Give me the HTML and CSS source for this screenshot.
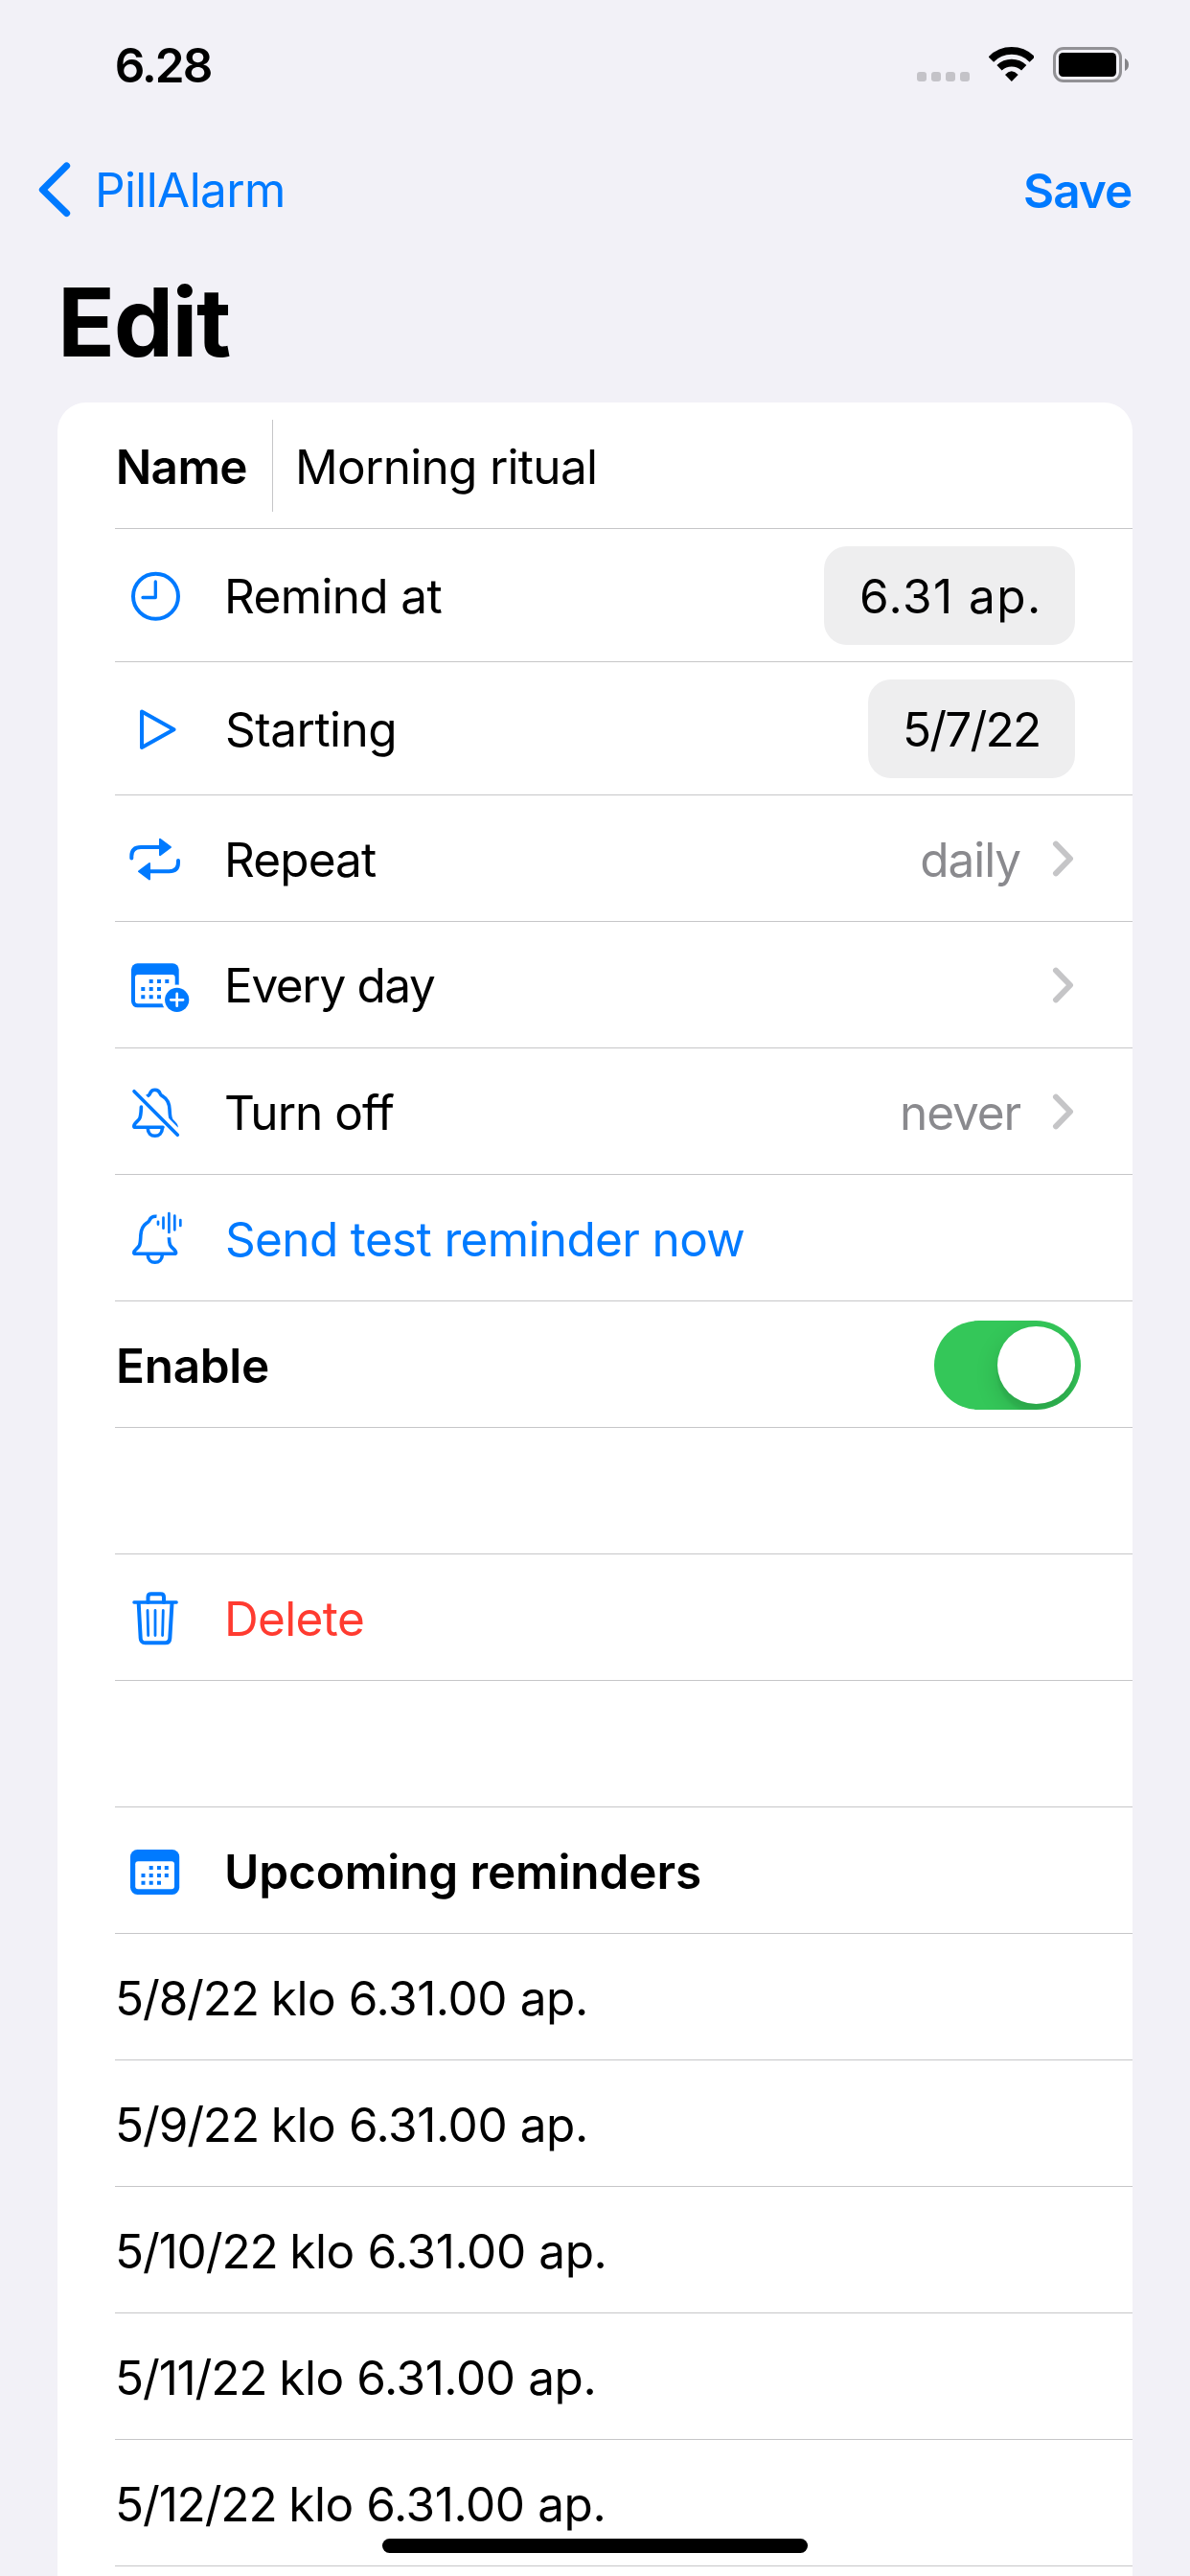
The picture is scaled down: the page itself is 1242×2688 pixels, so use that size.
FILE: index.html
```html
<!DOCTYPE html>
<html lang="en">
<head>
<meta charset="utf-8">
<title>Edit – PillAlarm</title>
<link rel="stylesheet" href="styles.css">
</head>
<body>
<div class="screen">
  <header class="status-bar">
    <span class="time">6.28</span>
    <div class="status-icons">
      <div class="signal"><i></i><i></i><i></i><i></i></div>
      <svg class="wifi" viewBox="395 87 143 108">
        <path d="M402 126A90 90 0 0 1 531 126M428 152A56 56 0 0 1 505 152" fill="none" stroke="#000" stroke-width="23"/>
        <path d="M466.500 195L446 174Q466 152 487 174Z"/>
      </svg>
      <svg class="battery" viewBox="0 0 79 37">
        <rect x="1.500" y="1.500" width="69" height="34" rx="9.500" fill="none" stroke="#929195" stroke-width="3"/>
        <rect x="6" y="6" width="60" height="25" rx="4.500"/>
        <path d="M75 12C77.500 13 79 15.500 79 18.500S77.500 24 75 25Z" fill="#858488"/>
      </svg>
    </div>
  </header>

  <nav class="nav-bar">
    <a class="back">
      <svg class="back-icon" viewBox="0 0 36 60"><path d="M29.500 5L4.500 30L29.500 54.500"/></svg>
      <span class="back-label">PillAlarm</span>
    </a>
    <a class="save">Save</a>
  </nav>

  <h1 class="title">Edit</h1>

  <main class="card">
    <div class="row name-row">
      <span class="label strong name">Name</span>
      <span class="label field">Morning ritual</span>
    </div>
    <div class="row tall">
      <svg class="icon" viewBox="0 0 114 138"><g class="line"><circle cx="42.500" cy="70.300" r="23.500"/><path class="thin" d="M42.300 55V71.500H29"/></g></svg>
      <span class="label">Remind at</span>
      <span class="pill time-pill">6.31 ap.</span>
    </div>
    <div class="row tall">
      <svg class="icon" viewBox="0 0 114 138"><path class="line" d="M28 51.500L61.500 70.200L28 89Z"/></svg>
      <span class="label starting">Starting</span>
      <span class="pill date-pill">5/7/22</span>
    </div>
    <div class="row">
      <svg class="icon" viewBox="0 0 114 131">
        <path class="line" d="M17.300 65.500V63.500C17.300 57 21 54 27 54H46M66 68V70C66 76.300 62.500 79.300 56.500 79.300H36"/>
        <path class="solid" d="M47 45.800L58 54L47 62.200ZM36 71.100L25 79.300L36 87.500Z"/>
      </svg>
      <span class="label repeat">Repeat</span>
      <span class="value">daily</span>
      <svg class="chevron" viewBox="0 0 24 42"><path d="M4 5.700L19 21L4 36.300"/></svg>
    </div>
    <div class="row">
      <svg class="icon" viewBox="0 0 114 131">
        <rect class="fill" x="17" y="43.300" width="49.700" height="46" rx="6.500"/>
        <rect class="paper" x="21" y="55" width="41.700" height="30.300" rx="3"/>
        <path class="dots" d="M37.700 62h0M46 62h0M54.300 62h0M29.300 70h0M37.700 70h0M46 70h0M29.300 78.300h0M37.700 78.300h0M46 78.300h0"/>
        <circle class="paper" cx="64.700" cy="81.300" r="15.800"/>
        <circle class="fill" cx="64.700" cy="81.300" r="12.600"/>
        <path class="plus" d="M58.300 81.300H71.100M64.700 74.900V87.700"/>
      </svg>
      <span class="label every">Every day</span>
      <svg class="chevron" viewBox="0 0 24 42"><path d="M4 5.700L19 21L4 36.300"/></svg>
    </div>
    <div class="row">
      <svg class="icon" viewBox="0 0 114 131"><g class="line bell">
        <path d="M27.400 61C27.200 65 27.200 69 26 72.500C24.800 76 19.800 77.500 19.800 81.200Q19.800 82.300 21.500 82.300H50"/>
        <path d="M33.300 50C35.500 49.500 36.300 48 36.800 46.500C37.600 44.500 39.300 43.200 41.700 43.200C44.300 43.200 46.300 44.800 47 47C47.600 48.800 48.800 49.300 50.300 50.200C55 53 56.700 58 57 63.500C57.300 69 57.300 71.500 58.500 74C60 77 63.500 78.500 64 81.500"/>
        <path d="M34.300 83.500C34.300 88.500 37.500 91.300 41.700 91.300S49.300 88.500 49.300 83.500"/>
        <path class="gap" d="M22.500 42L68 87.700"/>
        <path d="M20 44.700L65.300 90.300"/>
      </g></svg>
      <span class="label turn">Turn off</span>
      <span class="value">never</span>
      <svg class="chevron" viewBox="0 0 24 42"><path d="M4 5.700L19 21L4 36.300"/></svg>
    </div>
    <div class="row">
      <svg class="icon" viewBox="0 0 114 131">
        <g class="line bell">
          <path class="flat" d="M43.500 43.300C39.500 42.800 37 44.800 36 47.300C35.300 49 34.500 49.500 33 50.300C29 53 27.300 57 26.900 62.500C26.600 67.500 26.700 70.500 25.500 73.500C24 77 19.800 78 19.800 81.300Q19.800 82.300 21.300 82.300H62Q63.600 82.300 63.600 81.300C63.600 78 59 76.500 57.500 73C56.600 70.700 56.500 68.500 56.400 65.300"/>
          <path d="M34.300 83.500C34.300 88.500 37.500 91.300 41.700 91.300S49.300 88.500 49.300 83.500"/>
        </g>
        <path class="wave" d="M45 48.800V51.600M50.500 44.500V55.700M56.400 40V60M62.300 42.700V57.300M68.300 47.100V53"/>
      </svg>
      <span class="label link">Send test reminder now</span>
    </div>
    <div class="row">
      <span class="label strong enable">Enable</span>
      <span class="toggle"><i class="knob"></i></span>
    </div>
    <div class="row"></div>
    <div class="row">
      <svg class="icon" viewBox="0 0 114 131"><g class="line">
        <path class="thin" d="M19.900 50H64.200"/>
        <path d="M34.500 50V44.500Q34.500 41.200 37.800 41.200H47.700Q51 41.200 51 44.500V50M24.700 51L26.700 87.500Q27 92.200 31.500 92.200H52.500Q57 92.200 57.300 87.500L59.500 51"/>
        <path class="rib" d="M34 58.500L34.700 84.500M42 58.500V84.500M50.300 58.500L49.600 84.500"/>
      </g></svg>
      <span class="label delete">Delete</span>
    </div>
    <div class="row"></div>
    <div class="row">
      <svg class="icon" viewBox="0 0 114 131">
        <rect class="fill" x="16" y="44" width="51.200" height="47" rx="7.500"/>
        <rect class="paper" x="21.200" y="56.300" width="40.800" height="29" rx="3"/>
        <path class="dots" d="M37.700 63h0M46 63h0M53.800 63h0M29.500 71h0M37.700 71h0M46 71h0M53.800 71h0M29.500 78.700h0M37.700 78.700h0M46 78.700h0"/>
      </svg>
      <span class="label strong upcoming">Upcoming reminders</span>
    </div>
    <div class="row"><span class="label date"><span class="day">5/8/22 </span>klo 6.31.00 ap.</span></div>
    <div class="row"><span class="label date"><span class="day">5/9/22 </span>klo 6.31.00 ap.</span></div>
    <div class="row"><span class="label date"><span class="day">5/10/22 </span>klo 6.31.00 ap.</span></div>
    <div class="row"><span class="label date"><span class="day">5/11/22 </span>klo 6.31.00 ap.</span></div>
    <div class="row"><span class="label date"><span class="day">5/12/22 </span>klo 6.31.00 ap.</span></div>
    <div class="row"></div>
  </main>
  <div class="home-indicator"></div>
</div>
</body>
</html>
```

FILE: styles.css
```css
* { box-sizing: border-box; }

body {
  margin: 0;
  background: #f2f1f7;
  font-family: Inter, "Liberation Sans", sans-serif;
  font-size: 49.5px;
  line-height: 60px;
  color: #000;
}

.screen {
  position: relative;
  width: 1242px;
  height: 2688px;
  overflow: hidden;
}

svg { display: block; flex: none; }

/* Status bar */
.status-bar {
  display: flex;
  justify-content: space-between;
  align-items: center;
  height: 135px;
  padding: 0 64px 0 119.700px;
}
.time { font-weight: 600; letter-spacing: -1.900px; }
.status-icons { display: flex; align-items: flex-end; padding-bottom: 1px; }
.signal { display: flex; gap: 5px; margin: 0 19.700px 1px 0; }
.signal i { width: 10px; height: 10px; border-radius: 3px; background: #c4c3c8; }
.wifi { width: 47.700px; height: 36px; margin: 0 19.600px 1px 0; }
.battery { width: 79px; height: 37px; }

/* Navigation */
.nav-bar {
  display: flex;
  justify-content: space-between;
  align-items: center;
  height: 126px;
  padding: 0 60.700px 0 40px;
  color: #007aff;
}
.back { display: flex; align-items: center; }
.back-icon {
  width: 36px;
  height: 60px;
  margin-right: 23px;
  fill: none;
  stroke: #007aff;
  stroke-width: 7.300;
  stroke-linecap: round;
  stroke-linejoin: round;
}
.back-label { letter-spacing: -0.620px; }
.save { font-weight: 600; letter-spacing: -0.980px; padding-top: 2px; }

.title {
  margin: 0;
  height: 159px;
  padding: 15px 0 0 60px;
  font-size: 99px;
  line-height: 120px;
  font-weight: 700;
  letter-spacing: -1.460px;
}

/* Form card */
.card {
  margin: 0 60px;
  background: #fff;
  border-radius: 30px 30px 0 0;
}
.row {
  display: flex;
  align-items: center;
  height: 132px;
  margin-left: 60px;
  padding-right: 60px;
  border-bottom: 1px solid #c6c6c8;
}
.tall { height: 139px; }
.label {
  padding-top: 3px;
  letter-spacing: -0.650px;
  white-space: nowrap;
}
.tall .label { padding-top: 1px; }
.strong { font-weight: 600; }
.name {
  width: 165px;
  height: 96px;
  margin-top: 1px;
  padding: 19px 0 0 0.700px;
  border-right: 1px solid #c6c6c8;
}
.field { padding-left: 23px; letter-spacing: -0.710px; }
.starting { padding-left: 1px; letter-spacing: -0.500px; }
.repeat { letter-spacing: -0.890px; }
.every { padding-top: 1px; letter-spacing: -1.370px; }
.turn { letter-spacing: -0.960px; }
.link { padding-left: 1px; color: #007aff; }
.enable { padding-left: 1px; letter-spacing: -0.300px; }
.delete { color: #ff3b30; }
.upcoming { letter-spacing: -0.120px; }
.date { letter-spacing: -0.400px; }
.day { letter-spacing: -1.150px; }

.value {
  margin-left: auto;
  padding: 3px 33px 0 0;
  letter-spacing: -1.100px;
  color: #8a8a8e;
}
.chevron {
  width: 24px;
  height: 42px;
  margin-top: 1px;
  fill: none;
  stroke: #c5c5c7;
  stroke-width: 6;
  stroke-linecap: round;
  stroke-linejoin: round;
}
.every + .chevron { margin-left: auto; }

.pill {
  height: 103px;
  margin: 1px 0 0 auto;
  padding-top: 22px;
  border-radius: 24px;
  background: #eeeeef;
  white-space: nowrap;
}
.time-pill { width: 262px; padding-left: 37px; letter-spacing: 1.470px; }
.date-pill { width: 216px; padding-left: 36px; letter-spacing: -1.790px; }

.toggle {
  display: flex;
  justify-content: flex-end;
  width: 153px;
  height: 93px;
  margin: 2px -6px 0 auto;
  padding: 6px;
  border-radius: 47px;
  background: #34c759;
  overflow: hidden;
}
.knob {
  width: 81px;
  height: 81px;
  border-radius: 50%;
  background: #fff;
  box-shadow: 0 9px 24px rgba(0, 0, 0, 0.150), 0 9px 3px rgba(0, 0, 0, 0.060);
}

/* Row icons */
.icon { width: 114px; height: 131px; }
.tall .icon { height: 138px; }
.line {
  fill: none;
  stroke: #007aff;
  stroke-width: 4;
  stroke-linecap: round;
  stroke-linejoin: round;
}
.bell { stroke-width: 3.600; }
.flat { stroke-linecap: butt; }
.thin { stroke-width: 3.300; }
.rib { stroke-width: 2.800; }
.gap { stroke: #fff; stroke-width: 4; }
.solid { fill: #007aff; stroke: #007aff; stroke-width: 2; stroke-linejoin: round; }
.fill { fill: #007aff; }
.paper { fill: #fff; }
.dots { stroke: #007aff; stroke-width: 4; stroke-linecap: square; }
.plus { stroke: #fff; stroke-width: 2.700; stroke-linecap: round; }
.wave { stroke: #007aff; stroke-width: 2.700; stroke-linecap: round; }

.home-indicator {
  position: absolute;
  left: 399px;
  bottom: 24px;
  width: 444px;
  height: 15px;
  border-radius: 8px;
  background: #000;
}
```
